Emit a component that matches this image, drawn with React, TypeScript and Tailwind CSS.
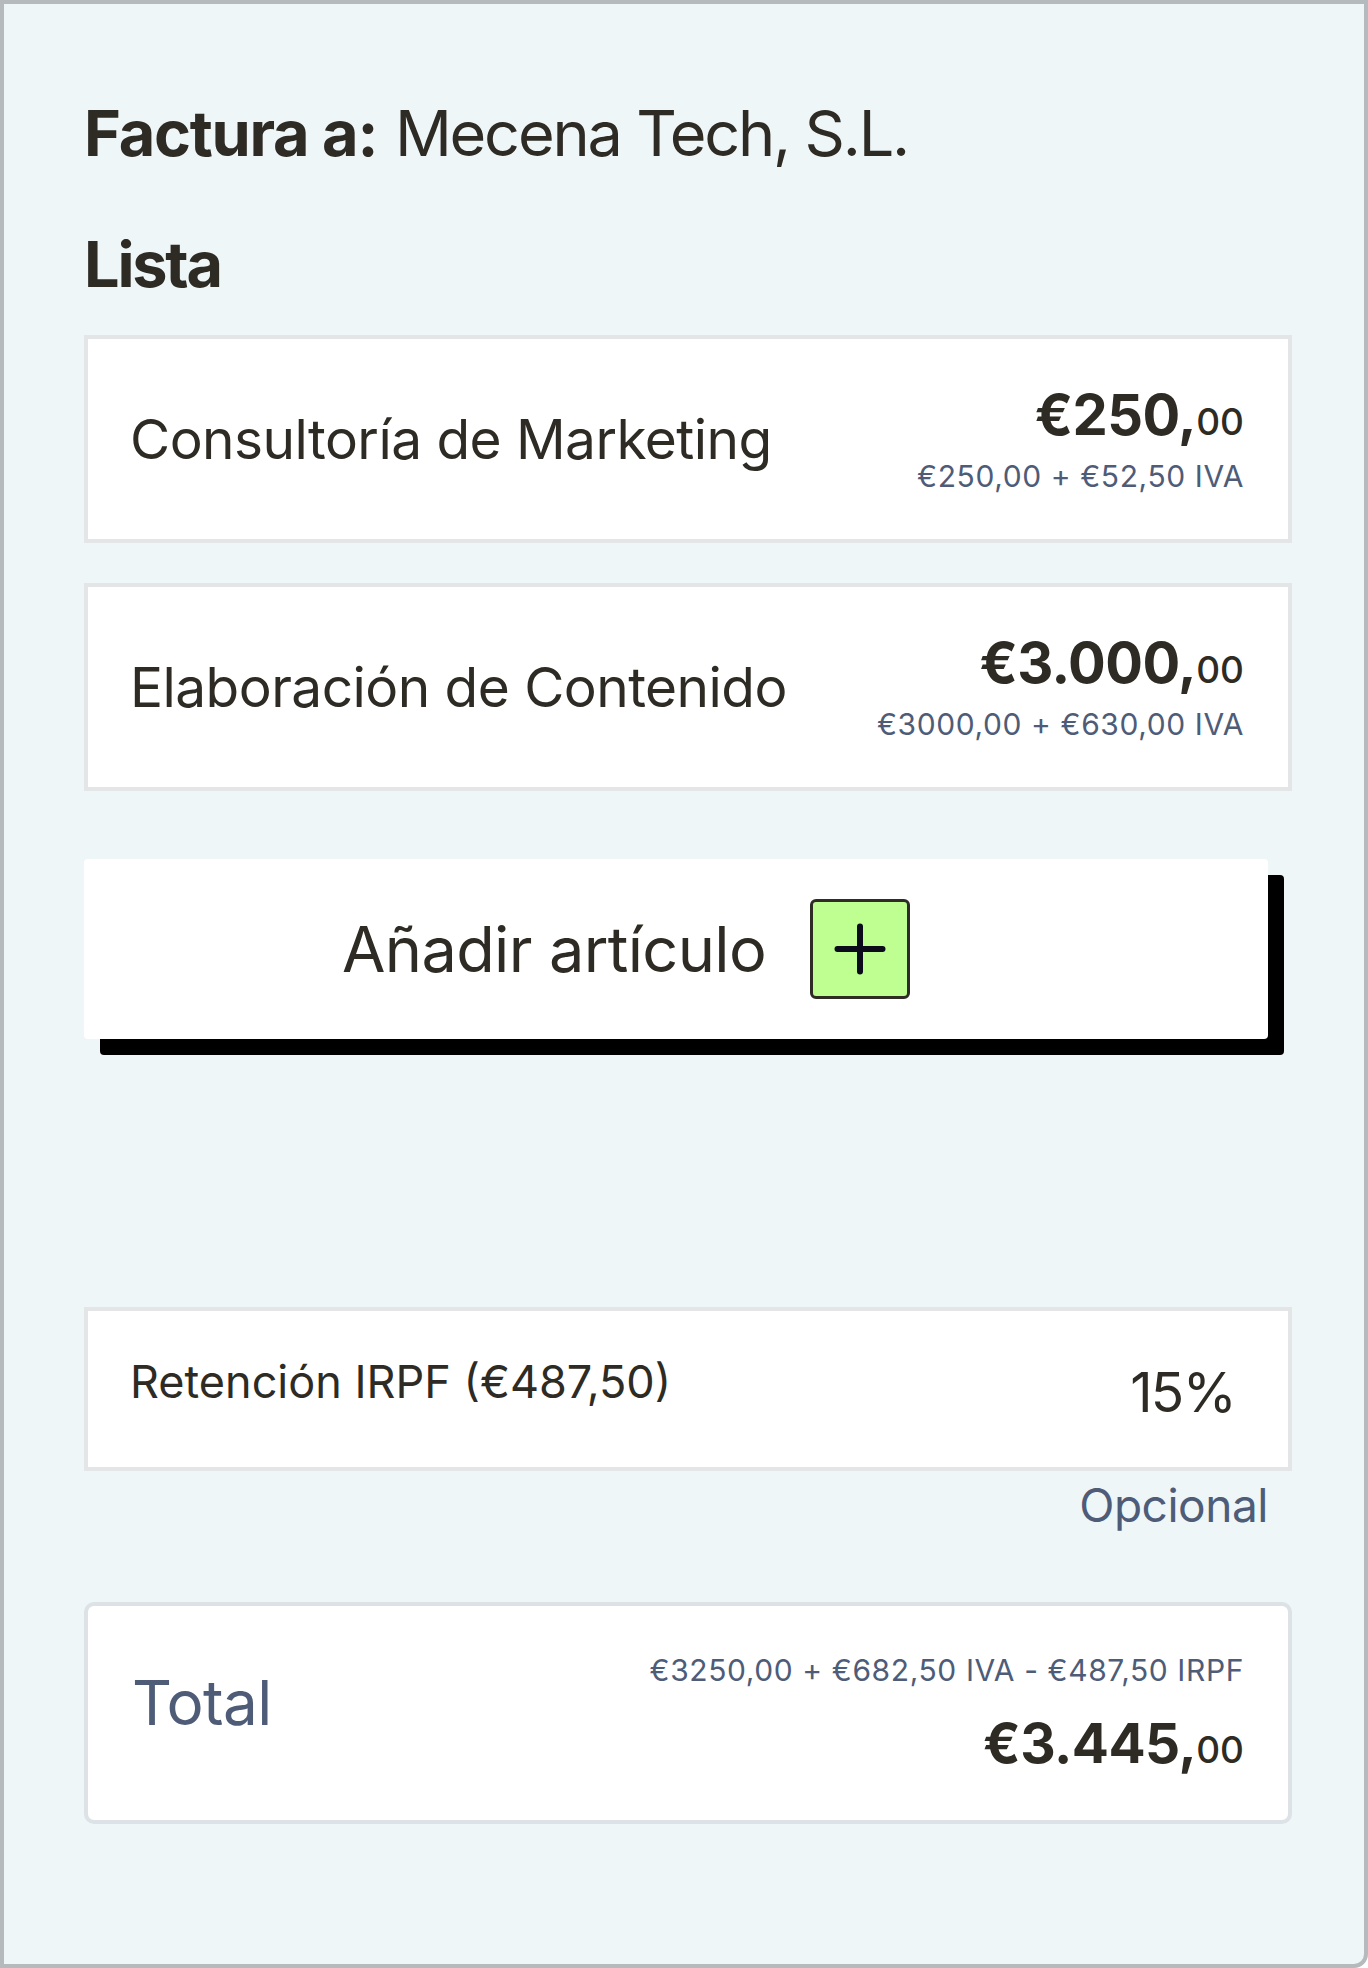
import React from "react";

const dark = "text-[#2e2b25]";

function Price({ main, cents }: { main: string; cents: string }) {
  return (
    <div className={`leading-none ${dark} whitespace-nowrap`}>
      <span className="text-[56px] font-bold tracking-[-0.01em]">{main},</span>
      <span className="text-[37px] font-medium">{cents}</span>
    </div>
  );
}

function ItemCard({ title, main, cents, sub }: { title: string; main: string; cents: string; sub: string }) {
  return (
    <div className="h-[208px] border-4 border-[#e4e5e6] bg-white flex items-center justify-between pl-[42px] pr-[44px]">
      <div className={`text-[55px] leading-none ${dark} tracking-[-0.01em] whitespace-nowrap`}>{title}</div>
      <div className="flex flex-col items-end gap-[18px]">
        <Price main={main} cents={cents} />
        <div className="text-[30px] leading-none text-[#4e5c78] whitespace-nowrap tracking-[0.02em]">{sub}</div>
      </div>
    </div>
  );
}

export default function App() {
  return (
    <div className="w-[1368px] h-[1968px] border-4 border-[#b5babd] rounded-br-[14px] bg-[#eef6f8] pl-20 pr-[72px] pt-[98px] flex flex-col font-[family-name:Inter,sans-serif]">
      <h1 className={`text-[63px] leading-none ${dark} whitespace-nowrap`}>
        <span className="font-bold tracking-[-0.02em]">Factura a:</span>{" "}
        <span className="font-normal tracking-[-0.035em]">Mecena Tech, S.L.</span>
      </h1>
      <h2 className={`mt-[68px] text-[63px] leading-none font-bold ${dark} tracking-[-0.035em]`}>Lista</h2>

      <div className="mt-[39px] flex flex-col gap-10">
        <ItemCard title="Consultoría de Marketing" main="€250" cents="00" sub="€250,00 + €52,50 IVA" />
        <ItemCard title="Elaboración de Contenido" main="€3.000" cents="00" sub="€3000,00 + €630,00 IVA" />
      </div>

      <button
        type="button"
        className="mt-[68px] mr-6 h-[180px] bg-white rounded-[4px] shadow-[16px_16px_0_0_#000] flex items-center pl-[258px] shrink-0"
      >
        <span className={`text-[63px] leading-none ${dark} whitespace-nowrap tracking-[-0.01em]`}>Añadir artículo</span>
        <span className="ml-[44px] w-[100px] h-[100px] rounded-[6px] border-[3px] border-[#2f2c26] bg-[#bfff91] flex items-center justify-center">
          <svg width="52" height="52" viewBox="0 0 52 52" fill="none">
            <path d="M26 3.5V48.5M3.5 26H48.5" stroke="#0b0b1c" strokeWidth="6" strokeLinecap="round" />
          </svg>
        </span>
      </button>

      <div className="mt-[268px] h-[164px] border-4 border-[#e4e5e6] bg-white flex items-center justify-between pl-[42px] pr-[53px] shrink-0">
        <div className={`text-[45px] leading-none ${dark} mb-[15px] whitespace-nowrap`}>Retención IRPF (€487,50)</div>
        <div className={`text-[55px] leading-none ${dark} mt-[6px] tracking-[-0.03em]`}>15%</div>
      </div>
      <div className="mt-[11px] mr-6 self-end text-[46px] leading-none text-[#4e5c78] tracking-[-0.01em]">Opcional</div>

      <div className="mt-[74px] h-[222px] rounded-[10px] border-4 border-[#dde2e6] bg-white flex items-center justify-between pl-[44px] pr-[44px] shrink-0">
        <div className="text-[62px] leading-none text-[#4e5c78] mb-5 tracking-[-0.01em]">Total</div>
        <div className="flex flex-col items-end gap-[31px]">
          <div className="text-[30px] leading-none text-[#4e5c78] whitespace-nowrap tracking-[0.02em]">€3250,00 + €682,50 IVA - €487,50 IRPF</div>
          <div className={`leading-none ${dark} whitespace-nowrap`}>
            <span className="text-[55px] font-bold tracking-[-0.01em]">€3.445,</span>
            <span className="text-[37px] font-medium">00</span>
          </div>
        </div>
      </div>
    </div>
  );
}
